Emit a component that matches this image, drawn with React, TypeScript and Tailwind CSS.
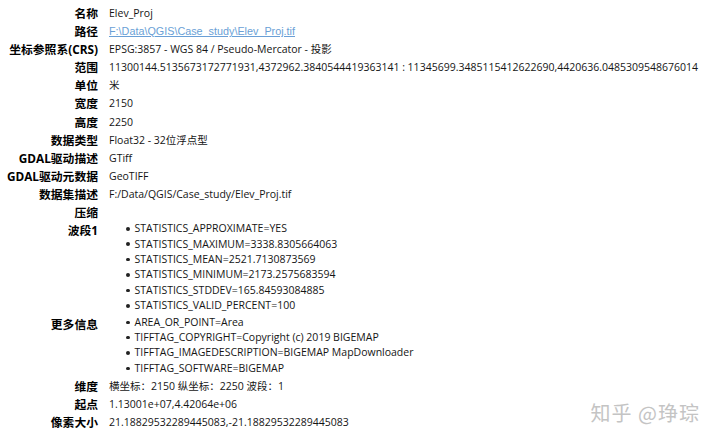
import React from "react"

type Row = {
  label: string
  value?: React.ReactNode
  items?: string[]
}

const rows: Row[] = [
  { label: "名称", value: "Elev_Proj" },
  {
    label: "路径",
    value: (
      <a
        href="#"
        className="text-[#6a9fd6] underline underline-offset-1 font-['Liberation_Sans',sans-serif] text-[10.8px]"
      >
        F:\Data\QGIS\Case_study\Elev_Proj.tif
      </a>
    ),
  },
  { label: "坐标参照系(CRS)", value: "EPSG:3857 - WGS 84 / Pseudo-Mercator - 投影" },
  {
    label: "范围",
    value:
      "11300144.5135673172771931,4372962.3840544419363141 : 11345699.3485115412622690,4420636.0485309548676014",
  },
  { label: "单位", value: "米" },
  { label: "宽度", value: "2150" },
  { label: "高度", value: "2250" },
  { label: "数据类型", value: "Float32 - 32位浮点型" },
  { label: "GDAL驱动描述", value: "GTiff" },
  { label: "GDAL驱动元数据", value: "GeoTIFF" },
  { label: "数据集描述", value: "F:/Data/QGIS/Case_study/Elev_Proj.tif" },
  { label: "压缩", value: "" },
  {
    label: "波段1",
    items: [
      "STATISTICS_APPROXIMATE=YES",
      "STATISTICS_MAXIMUM=3338.8305664063",
      "STATISTICS_MEAN=2521.7130873569",
      "STATISTICS_MINIMUM=2173.2575683594",
      "STATISTICS_STDDEV=165.84593084885",
      "STATISTICS_VALID_PERCENT=100",
    ],
  },
  {
    label: "更多信息",
    items: [
      "AREA_OR_POINT=Area",
      "TIFFTAG_COPYRIGHT=Copyright (c) 2019 BIGEMAP",
      "TIFFTAG_IMAGEDESCRIPTION=BIGEMAP MapDownloader",
      "TIFFTAG_SOFTWARE=BIGEMAP",
    ],
  },
  { label: "维度", value: "横坐标：2150 纵坐标：2250 波段：1" },
  { label: "起点", value: "1.13001e+07,4.42064e+06" },
  { label: "像素大小", value: "21.18829532289445083,-21.18829532289445083" },
]

function InfoRow({ row }: { row: Row }) {
  return (
    <div className="flex">
      <div className="w-[98px] shrink-0 text-right font-bold text-[11.8px] leading-[18.1px] text-black whitespace-nowrap">
        {row.label}
      </div>
      <div className="pl-[11px] min-w-0">
        {row.items ? (
          <ul className="pb-[1px] pl-[17px]">
            {row.items.map((item) => (
              <li key={item} className="flex items-center leading-[15.4px] whitespace-nowrap">
                <span className="w-[3.5px] h-[3.5px] rounded-full bg-[#222] mr-[5px] shrink-0" />
                {item}
              </li>
            ))}
          </ul>
        ) : (
          <div className="leading-[18.1px] whitespace-nowrap">{row.value}</div>
        )}
      </div>
    </div>
  )
}

export default function App() {
  return (
    <div className="relative w-[720px] h-[441px] bg-white overflow-hidden font-['Open_Sans','Noto_Sans_CJK_SC',sans-serif] text-[10.5px] text-[#151515]">
      <div className="pt-[4px] flex flex-col">
        {rows.map((row) => (
          <InfoRow key={row.label} row={row} />
        ))}
      </div>

      {/* watermark */}
      <div className="absolute right-[20px] bottom-[13px] text-[20px] text-[#c4c4c4] font-['Noto_Sans_CJK_SC',sans-serif] tracking-[1px]">
        知乎 @琤琮
      </div>
    </div>
  )
}
